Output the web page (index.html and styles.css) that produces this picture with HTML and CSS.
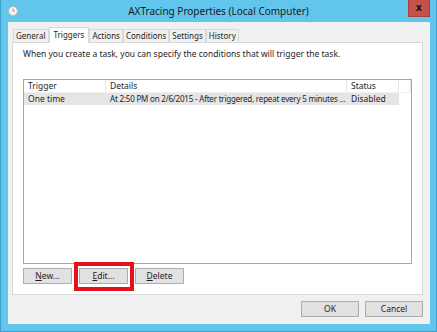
FILE: index.html
```html
<!DOCTYPE html>
<html lang="en">
<head>
    <meta charset="UTF-8">
    <title>AXTracing Properties (Local Computer)</title>
    <link rel="stylesheet" href="styles.css">
</head>
<body>
    <div class="window">
        <!-- Title bar -->
        <div class="titlebar">
            <svg class="app-icon" width="10" height="10" viewBox="0 0 10 10">
                <circle cx="5" cy="5" r="4.5" fill="#f4f4f4" stroke="#b8b8b8" stroke-width="1"/>
                <path d="M5 2.5 V5 H7" fill="none" stroke="#9a9a9a" stroke-width="1"/>
            </svg>
            <div class="title">AXTracing Properties (Local Computer)</div>
            <div class="close">x</div>
        </div>

        <div class="client">
            <!-- Tabs -->
            <div class="tabs">
                <div class="tab">General</div>
                <div class="tab active">Triggers</div>
                <div class="tab">Actions</div>
                <div class="tab">Conditions</div>
                <div class="tab">Settings</div>
                <div class="tab">History</div>
            </div>

            <div class="panel">
                <p class="intro">When you create a task, you can specify the conditions that will trigger the task.</p>

                <div class="listview">
                    <div class="row header">
                        <div class="cell col-trigger">Trigger</div>
                        <div class="cell col-details">Details</div>
                        <div class="cell col-status">Status</div>
                        <div class="cell col-fill"></div>
                    </div>
                    <div class="row selected">
                        <div class="cell col-trigger">One time</div>
                        <div class="cell col-details long">At 2:50 PM on 2/6/2015 - After triggered, repeat every 5 minutes ...</div>
                        <div class="cell col-status">Disabled</div>
                    </div>
                </div>

                <div class="actions">
                    <button class="btn"><u>N</u>ew...</button>
                    <span class="marked">
                        <button class="btn"><u>E</u>dit...</button>
                        <span class="highlight"></span>
                    </span>
                    <button class="btn"><u>D</u>elete</button>
                </div>
            </div>

            <!-- Dialog buttons -->
            <div class="footer">
                <button class="btn wide">OK</button>
                <button class="btn wide">Cancel</button>
            </div>
        </div>
    </div>
</body>
</html>
```

FILE: styles.css
```css
/* Reset */
body, p {
    margin: 0;
    padding: 0;
}

body {
    font-family: 'Noto Sans', 'Open Sans', sans-serif;
    font-size: 8.5px;
    color: #1e1e1e;
    background: #ffffff;
}

.window {
    width: 437px;
    height: 332px;
    box-sizing: border-box;
    background: #62c6ec;
    border: 1px solid #3f9fd0;
    border-top: none;
}

/* Title bar */
.titlebar {
    height: 22px;
    display: grid;
    grid-template-columns: 30px 1fr 30px;
    align-items: start;
}

.app-icon {
    margin: 6px 0 0 7px;
}

.title {
    text-align: center;
    font-size: 10px;
    line-height: 22px;
    color: #1a1a1a;
}

.close {
    justify-self: end;
    width: 22px;
    height: 17px;
    margin-right: 6px;
    background: #c7514a;
    border: 1px solid #a8413b;
    border-top: none;
    box-sizing: border-box;
    color: #111;
    font-weight: bold;
    font-size: 10px;
    line-height: 15px;
    text-align: center;
}

/* Client area */
.client {
    margin-left: 7px;
    width: 422px;
    height: 302px;
    background: #f0f0f0;
    padding: 5px 7px 0 4px;
    box-sizing: border-box;
}

.tabs {
    display: flex;
    align-items: flex-end;
    height: 15px;
    padding-left: 1px;
    font-size: 8px;
}

.tab {
    height: 13px;
    line-height: 12px;
    padding: 0 2px;
    background: #f0f0f0;
    border: 1px solid #d9d9d9;
    border-bottom: none;
    box-sizing: border-box;
}

.tab.active {
    height: 16px;
    line-height: 14px;
    background: #ffffff;
    margin-bottom: -1px;
    position: relative;
    padding: 0 4px;
}

.panel {
    width: 411px;
    height: 253px;
    box-sizing: border-box;
    background: #ffffff;
    border: 1px solid #d9d9d9;
    padding: 5px 10px 0 10px;
}

.intro {
    line-height: 12px;
}

/* List view */
.listview {
    margin-top: 19px;
    width: 389px;
    height: 185px;
    box-sizing: border-box;
    border: 1px solid #a6a6a6;
    background: #ffffff;
}

.row {
    display: flex;
    height: 12px;
    line-height: 12px;
}

.row.header .cell {
    border-right: 1px solid #e5e5e5;
}

.row.header {
    border-bottom: 1px solid #f0f0f0;
}

.row.selected {
    width: 375px;
    background: #e5e5e5;
}

.cell {
    box-sizing: border-box;
    padding-left: 4px;
    white-space: nowrap;
    overflow: hidden;
}

.cell.long {
    font-size: 8px;
    letter-spacing: -0.2px;
}

.col-trigger { width: 82px; }
.col-details { width: 241px; }
.col-status  { width: 52px; }
.col-fill    { width: 12px; border-right: none; }

/* Buttons */
.actions {
    display: flex;
    gap: 7px;
    margin-top: 4px;
}

.btn {
    font-family: inherit;
    font-size: 8.5px;
    color: #1e1e1e;
    width: 49px;
    height: 16px;
    padding: 0;
    background: #e1e1e1;
    border: 1px solid #adadad;
    line-height: 14px;
}

.btn.wide {
    width: 58px;
}

.marked {
    position: relative;
    display: flex;
}

.highlight {
    position: absolute;
    left: -5px;
    top: -6px;
    right: -6px;
    bottom: -7px;
    border: 4px solid #e3131b;
}

.footer {
    display: flex;
    justify-content: flex-end;
    gap: 6px;
    margin-top: 6px;
}
```
